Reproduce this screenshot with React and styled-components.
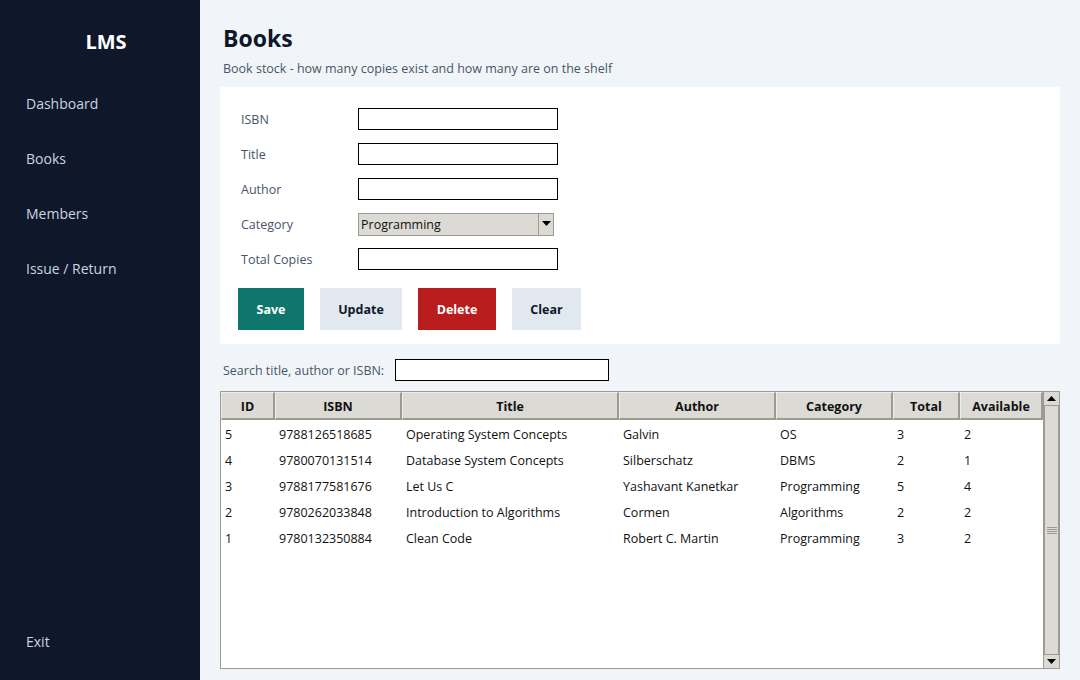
import React from "react";
import styled, { createGlobalStyle } from "styled-components";

const Global = createGlobalStyle`
  html, body { margin: 0; padding: 0; }
  body { font-family: "Open Sans", "Noto Sans", sans-serif; font-size: 12.5px; }
  * { box-sizing: border-box; }
`;

const Shell = styled.div`
  display: flex;
  width: 1080px;
  height: 680px;
  overflow: hidden;
`;

const Sidebar = styled.aside`
  width: 200px;
  flex: none;
  background: #0f172a;
  display: flex;
  flex-direction: column;
  padding: 0 0 28px 26px;
`;

const Logo = styled.div`
  color: #ffffff;
  font-weight: 700;
  font-size: 20px;
  text-align: center;
  margin: 27px 0 0 -14px;
  line-height: 30px;
`;

const Nav = styled.nav`
  display: flex;
  flex-direction: column;
  gap: 35px;
  margin-top: 37px;
`;

const NavItem = styled.div`
  color: #cbd5e1;
  font-size: 14px;
  line-height: 20px;
`;

const Spacer = styled.div`
  flex: 1;
`;

const Main = styled.main`
  flex: 1;
  background: #f1f5f9;
  padding: 23px 20px 11px 20px;
  display: flex;
  flex-direction: column;
`;

const Title = styled.h1`
  margin: 0 0 0 3px;
  font-size: 23px;
  line-height: 30px;
  font-weight: 700;
  color: #0f172a;
`;

const Subtitle = styled.div`
  margin: 7px 0 0 3px;
  color: #475569;
  font-size: 12.5px;
  line-height: 18px;
`;

const Card = styled.section`
  background: #ffffff;
  margin-top: 9px;
  padding: 21px 18px 14px 18px;
  display: flex;
  flex-direction: column;
`;

const FieldRow = styled.div`
  display: flex;
  align-items: center;
  height: 22px;
  margin-bottom: 13px;
`;

const Label = styled.label`
  width: 120px;
  padding-left: 3px;
  color: #475569;
  font-size: 12.5px;
`;

const Input = styled.input`
  width: ${(p) => p.$w || 200}px;
  height: 22px;
  border: 1px solid #000;
  background: #fff;
  padding: 0 3px;
  font: inherit;
  outline: none;
`;

const Combo = styled.div`
  width: 196px;
  height: 23px;
  display: flex;
  border: 1px solid #9e9a91;
  background: #dcdad5;
  color: #111;
  font-size: 12.5px;
`;

const ComboText = styled.div`
  flex: 1;
  padding-left: 2px;
  display: flex;
  align-items: center;
`;

const ComboButton = styled.div`
  width: 15px;
  border-left: 1px solid #9e9a91;
  display: flex;
  align-items: center;
  justify-content: center;
`;

const ButtonRow = styled.div`
  display: flex;
  gap: 16px;
  margin-top: 5px;
`;

const variants = {
  save: { bg: "#0f766e", fg: "#ffffff" },
  neutral: { bg: "#e2e8f0", fg: "#0f172a" },
  danger: { bg: "#b91c1c", fg: "#ffffff" },
};

const Button = styled.button`
  width: ${(p) => p.$w}px;
  height: 42px;
  border: none;
  background: ${(p) => variants[p.$v].bg};
  color: ${(p) => variants[p.$v].fg};
  font: inherit;
  font-weight: 700;
  font-size: 12.5px;
  padding: 0;
`;

const SearchRow = styled.div`
  display: flex;
  align-items: center;
  gap: 11px;
  margin-top: 15px;
  padding-left: 3px;
  color: #475569;
`;

const TableWrap = styled.div`
  margin-top: 10px;
  flex: 1;
  display: flex;
  min-height: 0;
`;

const Tree = styled.div`
  flex: 1;
  border: 1px solid #9e9a91;
  background: #fff;
  display: flex;
  flex-direction: column;
`;

const columns = "54px 127px 217px 157px 117px 67px 83px";

const HeaderRow = styled.div`
  display: grid;
  grid-template-columns: ${columns};
  height: 29px;
  border-bottom: 1px solid #fff;
`;

const HeadCell = styled.div`
  background: #dcdad5;
  border-top: 1px solid #eeede9;
  border-left: 1px solid #eeede9;
  border-right: 2px solid #9e9a91;
  border-bottom: 2px solid #9e9a91;
  display: flex;
  align-items: center;
  justify-content: center;
  padding-top: 2px;
  font-weight: 700;
  font-size: 12.5px;
  color: #111;
`;

const Row = styled.div`
  display: grid;
  grid-template-columns: ${columns};
  height: 26px;
  align-items: center;
  font-size: 12.5px;
  color: #111;
`;

const Cell = styled.div`
  padding-left: 4px;
  white-space: nowrap;
`;

const Scrollbar = styled.div`
  width: 16px;
  flex: none;
  background: #dcdad5;
  border: 1px solid #9e9a91;
  border-left: none;
  display: flex;
  flex-direction: column;
`;

const Arrow = styled.div`
  height: 14px;
  flex: none;
  display: flex;
  align-items: center;
  justify-content: center;
  border-bottom: ${(p) => (p.$down ? "none" : "1px solid #9e9a91")};
  border-top: ${(p) => (p.$down ? "1px solid #9e9a91" : "none")};
`;

const Thumb = styled.div`
  flex: 1;
  border-left: 1px solid #9e9a91;
  border-right: 1px solid #9e9a91;
  display: flex;
  flex-direction: column;
  align-items: center;
  justify-content: center;
  gap: 1px;
`;

const Grip = styled.div`
  width: 10px;
  height: 1px;
  background: #9e9a91;
`;

const Tri = ({ down }) => (
  <svg width="9" height="6" viewBox="0 0 9 6">
    <polygon points={down ? "0,0 9,0 4.5,5" : "0,5 9,5 4.5,0"} fill="#000" />
  </svg>
);

const books = [
  ["5", "9788126518685", "Operating System Concepts", "Galvin", "OS", "3", "2"],
  ["4", "9780070131514", "Database System Concepts", "Silberschatz", "DBMS", "2", "1"],
  ["3", "9788177581676", "Let Us C", "Yashavant Kanetkar", "Programming", "5", "4"],
  ["2", "9780262033848", "Introduction to Algorithms", "Cormen", "Algorithms", "2", "2"],
  ["1", "9780132350884", "Clean Code", "Robert C. Martin", "Programming", "3", "2"],
];

const headers = ["ID", "ISBN", "Title", "Author", "Category", "Total", "Available"];

export default function App() {
  return (
    <>
      <Global />
      <Shell>
        <Sidebar>
          <Logo>LMS</Logo>
          <Nav>
            <NavItem>Dashboard</NavItem>
            <NavItem>Books</NavItem>
            <NavItem>Members</NavItem>
            <NavItem>Issue / Return</NavItem>
          </Nav>
          <Spacer />
          <NavItem>Exit</NavItem>
        </Sidebar>
        <Main>
          <Title>Books</Title>
          <Subtitle>Book stock - how many copies exist and how many are on the shelf</Subtitle>
          <Card>
            <FieldRow>
              <Label>ISBN</Label>
              <Input />
            </FieldRow>
            <FieldRow>
              <Label>Title</Label>
              <Input />
            </FieldRow>
            <FieldRow>
              <Label>Author</Label>
              <Input />
            </FieldRow>
            <FieldRow>
              <Label>Category</Label>
              <Combo>
                <ComboText>Programming</ComboText>
                <ComboButton>
                  <Tri down />
                </ComboButton>
              </Combo>
            </FieldRow>
            <FieldRow>
              <Label>Total Copies</Label>
              <Input />
            </FieldRow>
            <ButtonRow>
              <Button $v="save" $w={66}>Save</Button>
              <Button $v="neutral" $w={82}>Update</Button>
              <Button $v="danger" $w={78}>Delete</Button>
              <Button $v="neutral" $w={69}>Clear</Button>
            </ButtonRow>
          </Card>
          <SearchRow>
            <span>Search title, author or ISBN:</span>
            <Input $w={214} />
          </SearchRow>
          <TableWrap>
            <Tree>
              <HeaderRow>
                {headers.map((h) => (
                  <HeadCell key={h}>{h}</HeadCell>
                ))}
              </HeaderRow>
              {books.map((b) => (
                <Row key={b[0]}>
                  {b.map((v, i) => (
                    <Cell key={i}>{v}</Cell>
                  ))}
                </Row>
              ))}
            </Tree>
            <Scrollbar>
              <Arrow>
                <Tri />
              </Arrow>
              <Thumb>
                <Grip />
                <Grip />
                <Grip />
                <Grip />
              </Thumb>
              <Arrow $down>
                <Tri down />
              </Arrow>
            </Scrollbar>
          </TableWrap>
        </Main>
      </Shell>
    </>
  );
}
